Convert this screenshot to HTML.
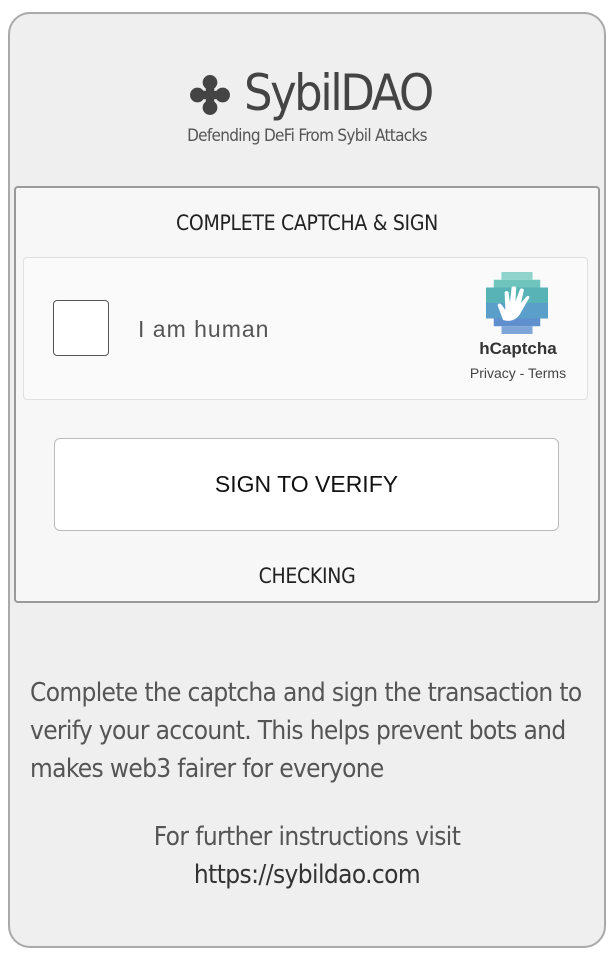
<!DOCTYPE html>
<html><head><meta charset="utf-8"><style>
body{margin:0;width:614px;height:957px;background:#fff;font-family:"Liberation Sans Narrow","DejaVu Sans Condensed","Liberation Sans",sans-serif;color:#444;position:relative;overflow:hidden}
.abs{position:absolute}
.card{left:8px;top:12px;width:594px;height:932px;border:2px solid #a9a9a9;border-radius:22px;background:#efefef}
.inner{left:14px;top:186px;width:582px;height:413px;border:2px solid #9a9a9a;border-radius:4px;background:#f7f7f7}
.cap{left:23px;top:257px;width:563px;height:141px;border:1px solid #e0e0e0;border-radius:4px;background:#fafafa}
.cb{left:53px;top:300px;width:54px;height:54px;border:1px solid #555;border-radius:4px;background:#fff}
.btn{left:54px;top:438px;width:503px;height:91px;border:1px solid #bbb;border-radius:6px;background:#fff;text-align:center;line-height:91px;font-family:"Liberation Sans",sans-serif;font-size:23px;color:#111}
.c{text-align:center;width:614px;left:0}
</style></head><body>
<div class="abs card"></div>
<svg class="abs" style="left:189px;top:74px" width="42" height="42" viewBox="0 0 40 40"><g fill="#444"><circle cx="20" cy="8" r="7"/><circle cx="20" cy="32" r="7"/><circle cx="8" cy="20" r="7"/><circle cx="32" cy="20" r="7"/><rect x="16" y="12" width="8" height="16"/><rect x="12" y="16" width="16" height="8"/></g></svg>
<div class="abs" style="left:244px;top:64px;font-size:50px;color:#444;letter-spacing:-2.5px">SybilDAO</div>
<div class="abs c" style="top:126px;font-size:17px;color:#555;letter-spacing:-0.7px">Defending DeFi From Sybil Attacks</div>
<div class="abs inner"></div>
<div class="abs c" style="top:211px;font-size:21px;color:#222;letter-spacing:-0.3px">COMPLETE CAPTCHA &amp; SIGN</div>
<div class="abs cap"></div>
<div class="abs cb"></div>
<div class="abs" style="left:138px;top:316px;font-family:'Liberation Sans',sans-serif;font-size:23px;color:#555;letter-spacing:1px">I am human</div>
<svg class="abs" style="left:486px;top:272px" width="62" height="62" viewBox="0 0 8 8">
<g>
<rect x="2" y="0" width="4" height="1" fill="#8fd3cc"/>
<rect x="1" y="1" width="6" height="1" fill="#6fc4bd"/>
<rect x="0" y="2" width="8" height="2" fill="#58b3b6"/>
<rect x="0" y="4" width="8" height="2" fill="#5a9fca"/>
<rect x="1" y="6" width="6" height="1" fill="#5f8fcc"/>
<rect x="2" y="7" width="4" height="1" fill="#7ea6d8"/>
</g>
<path d="M2.2 6.2 L1.5 4.3 Q1.6 3.9 2 4.2 L2.5 4.9 L2.4 2.6 Q2.7 2.3 2.9 2.6 L3.1 4 L3.3 2 Q3.6 1.7 3.9 2 L3.8 3.8 L4.4 2.2 Q4.7 2 4.9 2.3 L4.5 4 L5.3 3.1 Q5.6 3 5.6 3.3 L4.4 5.4 Q3.6 6.6 2.2 6.2Z" fill="#fff"/>
</svg>
<div class="abs" style="left:466px;top:339px;width:104px;text-align:center;font-family:'Liberation Sans',sans-serif;font-weight:bold;font-size:17px;color:#333">hCaptcha</div>
<div class="abs" style="left:460px;top:365px;width:116px;text-align:center;font-family:'Liberation Sans',sans-serif;font-size:14px;color:#444">Privacy - Terms</div>
<div class="abs btn">SIGN TO VERIFY</div>
<div class="abs c" style="top:564px;font-size:21px;color:#222;letter-spacing:-0.3px">CHECKING</div>
<div class="abs" style="left:30px;top:674px;width:580px;font-size:26px;line-height:38px;color:#555;letter-spacing:-0.65px">Complete the captcha and sign the transaction to verify your account. This helps prevent bots and makes web3 fairer for everyone</div>
<div class="abs c" style="top:818px;font-size:26px;line-height:38px;color:#555;letter-spacing:-0.6px">For further instructions visit<br><span style="color:#333">https://sybildao.com</span></div>
</body></html>
